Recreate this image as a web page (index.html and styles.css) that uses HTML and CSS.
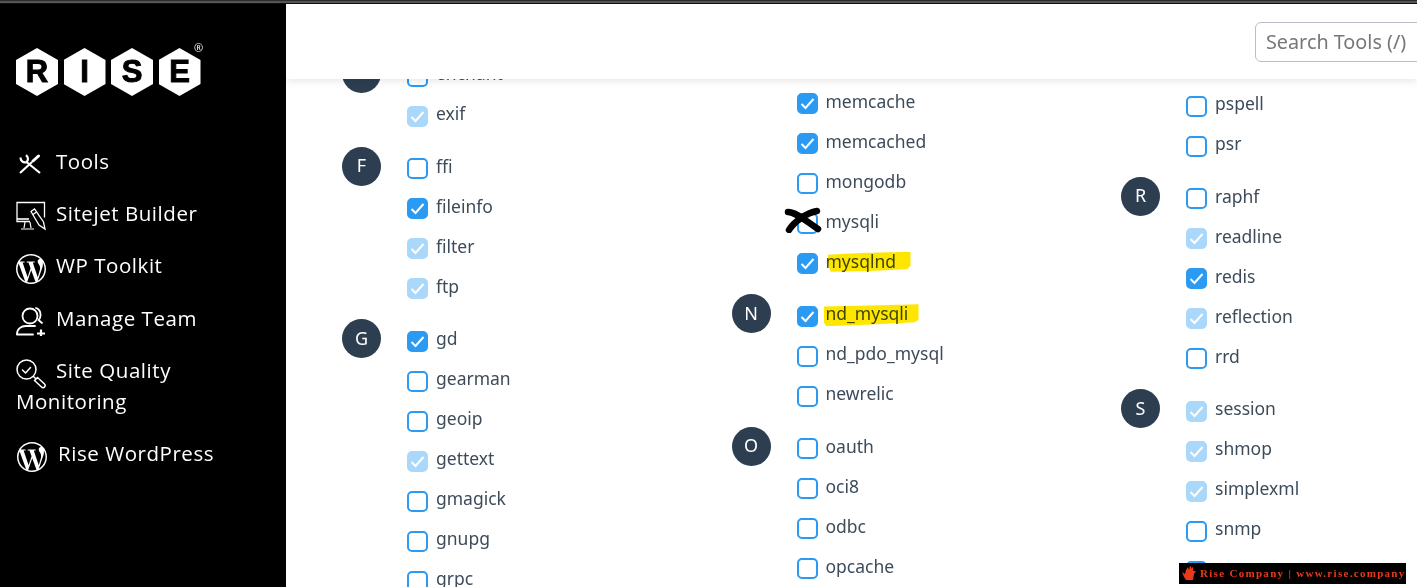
FILE: index.html
```html
<!DOCTYPE html>
<html>
<head>
    <title>Select PHP Version</title>
    <meta charset="UTF-8">
    <link rel="stylesheet" href="styles.css">
</head>
<body>
    <svg class="defs" width="0" height="0">
        <symbol id="wp" viewBox="0 0 24 24">
            <path fill="#fff" d="M21.469 6.825c.84 1.537 1.318 3.3 1.318 5.175 0 3.979-2.156 7.456-5.363 9.325l3.295-9.527c.615-1.54.82-2.771.82-3.864 0-.405-.026-.78-.07-1.11m-7.981.105c.647-.03 1.232-.105 1.232-.105.582-.075.514-.93-.067-.899 0 0-1.755.135-2.88.135-1.064 0-2.85-.15-2.85-.15-.585-.03-.661.855-.075.885 0 0 .54.061 1.125.09l1.68 4.605-2.37 7.08L5.354 6.9c.649-.03 1.234-.1 1.234-.1.585-.075.516-.93-.065-.896 0 0-1.746.138-2.874.138-.2 0-.438-.008-.69-.015C4.911 3.15 8.235 1.215 12 1.215c2.809 0 5.365 1.072 7.286 2.833-.046-.003-.091-.009-.141-.009-1.06 0-1.812.923-1.812 1.914 0 .89.513 1.643 1.06 2.531.411.72.89 1.643.89 2.977 0 .915-.354 1.994-.821 3.479l-1.075 3.585-3.9-11.61.001.014zM12 22.784c-1.059 0-2.081-.153-3.048-.437l3.237-9.406 3.315 9.087c.024.053.05.101.078.149-1.12.393-2.325.609-3.582.609M1.211 12c0-1.564.336-3.05.935-4.39L7.29 21.709C3.694 19.96 1.212 16.271 1.211 12M12 0C5.385 0 0 5.385 0 12s5.385 12 12 12 12-5.385 12-12S18.615 0 12 0"/>
        </symbol>
    </svg>

    <div class="top-strip"></div>
    <div class="page">
        <aside class="sidebar">
            <div class="logo">
                <span class="hex">R</span><span class="hex">I</span><span class="hex">S</span><span class="hex">E</span><span class="reg">®</span>
            </div>
            <ul class="nav">
                <li>
                    <svg class="nav-icon icon-tools" viewBox="0 0 22 20" fill="none" stroke="#fff" stroke-width="2.200">
                        <path d="M1 19 13 8"/>
                        <path d="M14 7 19.500 2" stroke-width="3" stroke-linecap="round"/>
                        <path d="M7.500 8 21 19"/>
                        <path d="M1.800 3.500C1 6.500 4.500 9.500 7.500 8 9.500 6.500 9.500 3 7 1.200"/>
                    </svg>Tools
                </li>
                <li>
                    <svg class="nav-icon" viewBox="0 0 30 29" fill="none" stroke="#fff" stroke-width="1.300">
                        <path d="M14 20H1V1h27.500v15"/>
                        <path d="M1 17.500h12" stroke-width="1.600"/>
                        <path d="M9 20.500l-1 6M14 20.500l1 6M5 27.500h13" stroke-width="1.200"/>
                        <path d="M15 10l3.500-2.500 9 13 1.500 7-6-4Z" fill="#000"/>
                        <path d="M17 13l3.500-2.500"/>
                    </svg>Sitejet Builder
                </li>
                <li>
                    <svg class="nav-icon"><use href="#wp"/></svg>WP Toolkit
                </li>
                <li>
                    <svg class="nav-icon" viewBox="0 0 30 30" fill="none" stroke="#fff" stroke-width="1.800" stroke-linecap="round">
                        <circle cx="14" cy="10" r="7.500"/>
                        <path d="M1 28c0-5 4-8 9-8h9"/>
                        <path d="M1 28.500h16"/>
                        <path d="M20 2c4 1 5.500 6 4 10l-1.500 2 3.500 3"/>
                        <path d="M25 23.500v8M21 27.500h8" stroke-width="2.200" stroke-linecap="butt"/>
                    </svg>Manage Team
                </li>
                <li>
                    <svg class="nav-icon" viewBox="0 0 30 30" fill="none" stroke="#fff" stroke-width="1.500" stroke-linecap="round" stroke-linejoin="round">
                        <circle cx="10.500" cy="10.500" r="9.500"/>
                        <path d="M6.500 11l3 3 5-5.500"/>
                        <path d="M17.500 17.500l2 2"/>
                        <path d="M18.500 21.500l3-3 7 6.500c1 1 .7 2.200 0 3s-2 1-3 0Z"/>
                    </svg>Site Quality Monitoring
                </li>
                <li class="nav-wide">
                    <svg class="nav-icon"><use href="#wp"/></svg>Rise WordPress
                </li>
            </ul>
        </aside>

        <main class="main">
            <header class="topbar">
                <input class="search" type="text" placeholder="Search Tools (/)">
            </header>

            <div class="columns">
                <section class="col">
                    <div class="group">
                        <span class="badge"></span>
                        <div class="rows">
                            <label class="row"><input type="checkbox">enchant</label>
                            <label class="row"><input type="checkbox" class="locked" checked>exif</label>
                        </div>
                    </div>
                    <div class="group">
                        <span class="badge">F</span>
                        <div class="rows">
                            <label class="row"><input type="checkbox">ffi</label>
                            <label class="row"><input type="checkbox" checked>fileinfo</label>
                            <label class="row"><input type="checkbox" class="locked" checked>filter</label>
                            <label class="row"><input type="checkbox" class="locked" checked>ftp</label>
                        </div>
                    </div>
                    <div class="group">
                        <span class="badge">G</span>
                        <div class="rows">
                            <label class="row"><input type="checkbox" checked>gd</label>
                            <label class="row"><input type="checkbox">gearman</label>
                            <label class="row"><input type="checkbox">geoip</label>
                            <label class="row"><input type="checkbox" class="locked" checked>gettext</label>
                            <label class="row"><input type="checkbox">gmagick</label>
                            <label class="row"><input type="checkbox">gnupg</label>
                            <label class="row"><input type="checkbox">grpc</label>
                        </div>
                    </div>
                </section>

                <section class="col col-mid">
                    <div class="group">
                        <span class="badge badge-empty"></span>
                        <div class="rows">
                            <label class="row"><input type="checkbox" checked>memcache</label>
                            <label class="row"><input type="checkbox" checked>memcached</label>
                            <label class="row"><input type="checkbox">mongodb</label>
                            <label class="row">
                                <input type="checkbox">mysqli
                                <svg class="cross" viewBox="0 0 38 26" fill="none" stroke="#000" stroke-width="6.500" stroke-linecap="round">
                                    <path d="M4 5C12 5 22 14 34 22"/>
                                    <path d="M5 23C10 15 22 6 33 4"/>
                                </svg>
                            </label>
                            <label class="row"><input type="checkbox" checked><span class="mark mark-one">mysqlnd</span></label>
                        </div>
                    </div>
                    <div class="group">
                        <span class="badge">N</span>
                        <div class="rows">
                            <label class="row"><input type="checkbox" checked><span class="mark mark-two">nd_mysqli</span></label>
                            <label class="row"><input type="checkbox">nd_pdo_mysql</label>
                            <label class="row"><input type="checkbox">newrelic</label>
                        </div>
                    </div>
                    <div class="group">
                        <span class="badge">O</span>
                        <div class="rows">
                            <label class="row"><input type="checkbox">oauth</label>
                            <label class="row"><input type="checkbox">oci8</label>
                            <label class="row"><input type="checkbox">odbc</label>
                            <label class="row"><input type="checkbox">opcache</label>
                        </div>
                    </div>
                </section>

                <section class="col col-last">
                    <div class="group">
                        <span class="badge badge-empty"></span>
                        <div class="rows">
                            <label class="row"><input type="checkbox">pspell</label>
                            <label class="row"><input type="checkbox">psr</label>
                        </div>
                    </div>
                    <div class="group">
                        <span class="badge">R</span>
                        <div class="rows">
                            <label class="row"><input type="checkbox">raphf</label>
                            <label class="row"><input type="checkbox" class="locked" checked>readline</label>
                            <label class="row"><input type="checkbox" checked>redis</label>
                            <label class="row"><input type="checkbox" class="locked" checked>reflection</label>
                            <label class="row"><input type="checkbox">rrd</label>
                        </div>
                    </div>
                    <div class="group">
                        <span class="badge">S</span>
                        <div class="rows">
                            <label class="row"><input type="checkbox" class="locked" checked>session</label>
                            <label class="row"><input type="checkbox" class="locked" checked>shmop</label>
                            <label class="row"><input type="checkbox" class="locked" checked>simplexml</label>
                            <label class="row"><input type="checkbox">snmp</label>
                            <label class="row row-covered"><input type="checkbox" checked></label>
                        </div>
                    </div>
                </section>
            </div>

            <div class="watermark">
                <svg class="wm-icon" viewBox="0 0 16 16" fill="#e8391a">
                    <path d="M1 7l3 2 1-4 2-3 1 3 1-4 1 .5V4l1-2 1 .5V6h3l-2 3-1 6H5L3 12Z"/>
                </svg>
                <span>Rise Company | www.rise.company</span>
            </div>
        </main>
    </div>
</body>
</html>
```

FILE: styles.css
```css
* {
    box-sizing: border-box;
    margin: 0;
    padding: 0;
}

html, body {
    height: 100%;
    overflow: hidden;
}

body {
    font-family: 'Open Sans', sans-serif;
    background: #fff;
    display: flex;
    flex-direction: column;
}

.defs {
    display: none;
}

.top-strip {
    height: 4px;
    flex: none;
    background: #555;
    border-top: 1px solid #2a2a2a;
    border-bottom: 1px solid #111;
}

.page {
    flex: 1;
    display: flex;
    min-height: 0;
}

/* sidebar */
.sidebar {
    width: 286px;
    flex: none;
    background: #000;
    color: #fff;
    padding: 44px 16px 0;
}

.logo {
    display: flex;
    gap: 5.500px;
    position: relative;
    width: 185px;
}

.hex {
    width: 42px;
    height: 48px;
    background: #fff;
    clip-path: polygon(50% 0, 100% 25%, 100% 75%, 50% 100%, 0 75%, 0 25%);
    color: #000;
    font-family: 'Liberation Sans', sans-serif;
    font-weight: 700;
    font-size: 31px;
    -webkit-text-stroke: 1px #000;
    display: flex;
    align-items: center;
    justify-content: center;
}

.reg {
    position: absolute;
    left: 178px;
    top: -6px;
    font-size: 11px;
    line-height: 12px;
}

.nav {
    list-style: none;
    margin-top: 49.500px;
}

.nav li {
    font-size: 20.500px;
    line-height: 31px;
    letter-spacing: .55px;
    margin-bottom: 21.400px;
}

.nav-icon {
    width: 30px;
    height: 30px;
    margin: -6px 10px -6px 0;
    vertical-align: middle;
    position: relative;
    top: 1px;
}

.icon-tools {
    width: 22px;
    height: 20px;
    margin: -6px 15px -6px 3px;
}

.nav-wide .nav-icon {
    margin: -6px 11px -6px 1px;
}

/* main area */
.main {
    flex: 1;
    min-width: 0;
    position: relative;
    overflow: hidden;
}

.topbar {
    height: 75px;
    background: #fff;
    box-shadow: 0 2px 8px rgba(0,0,0,0.1);
    display: flex;
    justify-content: flex-end;
    align-items: flex-start;
    padding-top: 18px;
    position: relative;
    z-index: 2;
}

.search {
    flex: none;
    width: 200px;
    height: 40px;
    margin-right: -38px;
    padding: 0 10px 2px;
    border: 1px solid #bdbdc9;
    border-radius: 6px;
    font-family: 'Noto Sans', sans-serif;
    font-size: 19.800px;
}

.search::placeholder {
    color: #777;
    opacity: 1;
}

.columns {
    display: grid;
    grid-template-columns: repeat(3, 389.500px);
    align-items: start;
    margin-top: -25px;
    padding-left: 56px;
    font-family: 'Noto Sans', sans-serif;
}

.col-mid {
    padding-top: 27.750px;
}

.col-last {
    padding-top: 30px;
}

.group {
    display: flex;
    margin-bottom: 12.500px;
}

.badge {
    width: 39px;
    height: 39px;
    flex: none;
    margin-right: 26px;
    padding-bottom: 2px;
    border-radius: 50%;
    background: #2c3e50;
    color: #fff;
    font-size: 18px;
    display: flex;
    align-items: center;
    justify-content: center;
}

.badge-empty {
    background: none;
}

.rows {
    flex: 1;
}

.row {
    height: 40px;
    padding-bottom: 2px;
    display: flex;
    align-items: center;
    position: relative;
    font-size: 17.500px;
    color: #3d4b5a;
}

.row input {
    appearance: none;
    width: 21px;
    height: 21px;
    flex: none;
    margin: 6px 8px 0 0;
    border: 2px solid #2b9af3;
    border-radius: 5px;
    background: #fff;
}

.row input:checked {
    background: #2b9af3 url("data:image/svg+xml,%3Csvg xmlns='http://www.w3.org/2000/svg' viewBox='0 0 21 21'%3E%3Cpath d='M4.500 11l4 4 8-9' fill='none' stroke='%23fff' stroke-width='2'/%3E%3C/svg%3E") center/21px no-repeat;
}

.row input.locked {
    border-color: #aad8fb;
    background-color: #aad8fb;
}

/* marker pen over the screenshot */
.cross {
    position: absolute;
    left: -13px;
    top: 5px;
    width: 38px;
    height: 26px;
}

.mark {
    position: relative;
}

.mark::after {
    content: "";
    position: absolute;
    background: #ffe600;
    mix-blend-mode: multiply;
}

.mark-one::after {
    left: 2px;
    top: 3px;
    width: 83px;
    height: 20px;
    clip-path: polygon(0 15%, 40% 6%, 100% 0, 100% 70%, 96% 88%, 50% 96%, 4% 100%, 0 60%);
}

.mark-two::after {
    left: -2px;
    top: 3px;
    width: 95px;
    height: 22px;
    clip-path: polygon(0 10%, 50% 6%, 100% 0, 100% 72%, 96% 82%, 50% 92%, 3% 100%, 0 80%);
}

.watermark {
    position: absolute;
    right: 11px;
    bottom: 3px;
    width: 227px;
    height: 21px;
    padding: 0 0 2px 2px;
    background: #000;
    color: #e8391a;
    font-family: 'Liberation Serif', serif;
    font-weight: 700;
    font-size: 11px;
    letter-spacing: 1.300px;
    display: flex;
    align-items: center;
    gap: 3px;
    white-space: nowrap;
    z-index: 3;
}

.wm-icon {
    width: 16px;
    height: 16px;
    flex: none;
}
```
